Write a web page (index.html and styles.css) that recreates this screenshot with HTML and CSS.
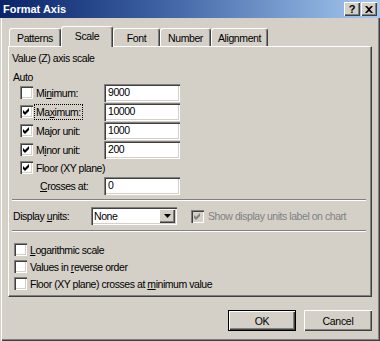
FILE: index.html
```html
<!DOCTYPE html>
<html lang="en">
<head>
    <meta charset="UTF-8">
    <title>Format Axis</title>
    <link rel="stylesheet" href="styles.css">
</head>
<body>
<div class="window">
    <div class="titlebar">
        <span class="title">Format Axis</span>
        <div class="caption-buttons">
            <span class="cap-btn">?</span>
            <span class="cap-btn">
                <svg width="8" height="7" viewBox="0 0 8 7"><path d="M0 0h2l2 2 2-2h2L5 3.5 8 7H6L4 5 2 7H0l3-3.5z" fill="#000"/></svg>
            </span>
        </div>
    </div>

    <div class="client">
        <div class="tabs">
            <div class="tab tab-patterns">Patterns</div>
            <div class="tab tab-scale active">Scale</div>
            <div class="tab tab-font">Font</div>
            <div class="tab tab-number">Number</div>
            <div class="tab tab-align">Alignment</div>
        </div>

        <div class="panel">
            <div class="group-title">Value (Z) axis scale</div>
            <div class="auto">Auto</div>

            <div class="scale-row">
                <span class="cb"></span>
                <span class="scale-label">Mi<u>n</u>imum:</span>
                <span class="field">9000</span>
            </div>
            <div class="scale-row">
                <span class="cb checked"><svg viewBox="0 0 13 13"><path d="M3 5l2 2 4-4v3l-4 4-2-2z"/></svg></span>
                <span class="scale-label"><span class="focus">Ma<u>x</u>imum:</span></span>
                <span class="field">10000</span>
            </div>
            <div class="scale-row">
                <span class="cb checked"><svg viewBox="0 0 13 13"><path d="M3 5l2 2 4-4v3l-4 4-2-2z"/></svg></span>
                <span class="scale-label">Ma<u>j</u>or unit:</span>
                <span class="field">1000</span>
            </div>
            <div class="scale-row">
                <span class="cb checked"><svg viewBox="0 0 13 13"><path d="M3 5l2 2 4-4v3l-4 4-2-2z"/></svg></span>
                <span class="scale-label">M<u>i</u>nor unit:</span>
                <span class="field">200</span>
            </div>
            <div class="scale-row floor-row">
                <span class="cb checked"><svg viewBox="0 0 13 13"><path d="M3 5l2 2 4-4v3l-4 4-2-2z"/></svg></span>
                <span>Floor (XY plane)</span>
            </div>
            <div class="scale-row crosses-row">
                <span class="crosses-label"><u>C</u>rosses at:</span>
                <span class="field">0</span>
            </div>

            <div class="sep"></div>

            <div class="units-row">
                <span class="units-label">Display <u>u</u>nits:</span>
                <span class="select">
                    <span class="select-value">None</span>
                    <span class="select-btn">
                        <svg width="7" height="4" viewBox="0 0 7 4"><path d="M0 0h7L3.5 4z" fill="#000"/></svg>
                    </span>
                </span>
                <span class="show-units">
                    <span class="cb disabled checked"><svg viewBox="0 0 13 13"><path d="M3 5l2 2 4-4v3l-4 4-2-2z"/></svg></span>
                    <span>Show display units label on chart</span>
                </span>
            </div>

            <div class="sep sep-lower"></div>

            <div class="options">
                <div class="opt-row">
                    <span class="cb"></span>
                    <span><u>L</u>ogarithmic scale</span>
                </div>
                <div class="opt-row">
                    <span class="cb"></span>
                    <span>Values in <u>r</u>everse order</span>
                </div>
                <div class="opt-row">
                    <span class="cb"></span>
                    <span>Floor (XY plane) crosses at <u>m</u>inimum value</span>
                </div>
            </div>
        </div>

        <div class="buttons">
            <span class="btn default">OK</span>
            <span class="btn">Cancel</span>
        </div>
    </div>
</div>
</body>
</html>
```

FILE: styles.css
```css
* {
    box-sizing: border-box;
}
body {
    margin: 0;
    font-family: "Liberation Sans", Arial, sans-serif;
    font-size: 10.5px;
    color: #000;
    background: #d4d0c8;
}
u {
    text-decoration-thickness: 1px;
    text-underline-offset: 1px;
}

/* window frame */
.window {
    width: 380px;
    height: 341px;
    display: flex;
    flex-direction: column;
    background: #d4d0c8;
    box-shadow: inset 1px 0 #d4d0c8, inset 2px 0 #fff, inset -1px -1px #404040, inset -2px -2px #808080;
}
.titlebar {
    height: 18px;
    flex: none;
    display: flex;
    align-items: center;
    justify-content: space-between;
    padding: 0 3px 0 3px;
    background: linear-gradient(90deg, #0a246a, #3a5ea0 40%, #a6caf0);
    color: #fff;
    font-size: 11px;
    font-weight: bold;
}
.caption-buttons {
    display: flex;
    gap: 1px;
}
.cap-btn {
    width: 16px;
    height: 14px;
    display: flex;
    align-items: center;
    justify-content: center;
    background: #d4d0c8;
    color: #000;
    font-size: 11px;
    font-weight: bold;
    box-shadow: inset 1px 1px #fff, inset -1px -1px #404040, inset -2px -2px #808080;
}

.client {
    flex: 1;
    display: flex;
    flex-direction: column;
    padding: 8px 0 0 8px;
}

/* tabs */
.tabs {
    display: flex;
    align-items: flex-end;
    height: 20px;
    padding-left: 1px;
    position: relative;
    z-index: 1;
}
.tab {
    height: 18px;
    line-height: 18px;
    text-align: center;
    background: #d4d0c8;
    border-top: 1px solid #fff;
    border-left: 1px solid #fff;
    border-right: 1px solid #404040;
    border-radius: 3px 3px 0 0;
    box-shadow: inset -1px 0 #808080;
    letter-spacing: -0.4px;
}
.tab.active {
    height: 21px;
    line-height: 18px;
    margin-bottom: -1px;
}
.tab-patterns { width: 52px; }
.tab-scale { width: 52px; }
.tab-font { width: 47px; }
.tab-number { width: 51px; }
.tab-align { width: 57px; }

.panel {
    width: 364px;
    height: 251px;
    flex: none;
    padding: 4px 5px 0 3px;
    border-top: 1px solid #fff;
    border-left: 1px solid #fff;
    border-right: 1px solid #404040;
    border-bottom: 1px solid #404040;
    box-shadow: inset -1px -1px #808080;
    letter-spacing: -0.45px;
}
.group-title {
    height: 14px;
    line-height: 14px;
}
.auto {
    margin-top: 6px;
    height: 12px;
    line-height: 12px;
    padding-left: 1px;
}

/* checkbox */
.cb {
    width: 13px;
    height: 13px;
    flex: none;
    background: #fff;
    box-shadow: inset 1px 1px #808080, inset 2px 2px #404040, inset -1px -1px #fff, inset -2px -2px #d4d0c8;
}
.cb svg {
    display: block;
    width: 13px;
    height: 13px;
    fill: #000;
}
.cb.disabled {
    background: #d4d0c8;
}
.cb.disabled svg {
    fill: #808080;
}

/* scale rows */
.scale-row {
    display: flex;
    align-items: center;
    height: 19px;
    padding-left: 8px;
}
.scale-row .cb {
    margin-right: 3px;
}
.scale-label {
    width: 68px;
}
.focus {
    outline: 1px dotted #000;
    outline-offset: 1px;
}
.field {
    width: 76px;
    height: 18px;
    line-height: 17px;
    padding-left: 4px;
    background: #fff;
    box-shadow: inset 1px 1px #808080, inset 2px 2px #404040, inset -1px -1px #fff, inset -2px -2px #d4d0c8;
}
.floor-row {
    height: 17px;
}
.crosses-row {
    padding-left: 28px;
}
.crosses-label {
    width: 64px;
}

.sep {
    height: 2px;
    margin-top: 4px;
    border-top: 1px solid #808080;
    border-bottom: 1px solid #fff;
}
.sep-lower {
    margin-top: 5px;
}

/* display units */
.units-row {
    display: flex;
    align-items: center;
    height: 18px;
    margin-top: 6px;
    padding-left: 1px;
}
.units-label {
    width: 78px;
}
.select {
    width: 86px;
    height: 18px;
    display: flex;
    align-items: stretch;
    padding: 2px;
    background: #fff;
    box-shadow: inset 1px 1px #808080, inset 2px 2px #404040, inset -1px -1px #fff, inset -2px -2px #d4d0c8;
}
.select-value {
    flex: 1;
    line-height: 14px;
    padding-left: 1px;
}
.select-btn {
    width: 16px;
    display: flex;
    align-items: center;
    justify-content: center;
    background: #d4d0c8;
    box-shadow: inset 1px 1px #fff, inset -1px -1px #404040, inset -2px -2px #808080;
}
.show-units {
    display: flex;
    align-items: center;
    margin-left: 14px;
    color: #808080;
}
.show-units .cb {
    margin-right: 4px;
}

/* bottom options */
.options {
    margin-top: 9px;
}
.opt-row {
    display: flex;
    align-items: center;
    height: 17px;
    padding-left: 2px;
}
.opt-row .cb {
    margin-right: 3px;
}

/* dialog buttons */
.buttons {
    display: flex;
    justify-content: flex-end;
    gap: 8px;
    margin-top: 13px;
    padding-right: 8px;
    letter-spacing: -0.3px;
}
.btn {
    width: 68px;
    height: 21px;
    display: flex;
    align-items: center;
    justify-content: center;
    background: #d4d0c8;
    box-shadow: inset 1px 1px #fff, inset -1px -1px #404040, inset -2px -2px #808080;
}
.btn.default {
    border: 1px solid #000;
}
```
